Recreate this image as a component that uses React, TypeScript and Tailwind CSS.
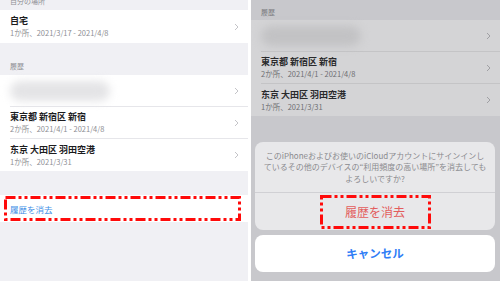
const font = { fontFamily: '"Noto Sans CJK JP", "Noto Sans", sans-serif' };

interface Place {
  title: string;
  sub: string;
  blurred?: boolean;
}

const history: Place[] = [
  { title: "", sub: "", blurred: true },
  { title: "東京都 新宿区 新宿", sub: "2か所、2021/4/1 - 2021/4/8" },
  { title: "东京 大田区 羽田空港", sub: "1か所、2021/3/31" },
];

function Chevron({ color }: { color: string }) {
  return (
    <svg width="5" height="8" viewBox="0 0 5 8" className="shrink-0">
      <polyline points="1,1 4,4 1,7" fill="none" stroke={color} strokeWidth="1" />
    </svg>
  );
}

function DashBox({ w, h }: { w: number; h: number }) {
  return (
    <svg width={w} height={h} className="absolute left-0 top-0">
      <rect
        x="1.5"
        y="1.5"
        width={w - 3}
        height={h - 3}
        fill="none"
        stroke="#ff0a0a"
        strokeWidth="3"
        strokeDasharray="10 3 3 3 3 3"
      />
    </svg>
  );
}

function Row({ place, dim, last }: { place: Place; dim?: boolean; last?: boolean }) {
  return (
    <div className={`flex h-[32px] items-center pl-[10px] ${dim ? "bg-[#d4d4d6]" : "bg-white"}`}>
      <div className={`flex h-full flex-1 items-center pr-[9px] ${last ? "" : dim ? "border-b border-[#c4c4c6]" : "border-b border-[#e6e6ea]"}`}>
        <div className="flex-1">
          {place.blurred ? (
            <div className={`h-[20px] w-[100px] rounded-full blur-[4px] ${dim ? "bg-[#c2c2c4]" : "bg-[#e4e4e6]"}`} />
          ) : (
            <>
              <div className={`text-[9px] font-semibold leading-[12px] ${dim ? "text-[#2a2a2c]" : "text-[#1c1c1e]"}`}>{place.title}</div>
              <div className={`text-[7.5px] leading-[11px] ${dim ? "text-[#6e6e72]" : "text-[#8e8e93]"}`}>{place.sub}</div>
            </>
          )}
        </div>
        <Chevron color={dim ? "#a0a0a4" : "#c4c4c8"} />
      </div>
    </div>
  );
}

function LeftPanel() {
  return (
    <div className="flex h-full w-[248px] flex-col overflow-hidden bg-[#f0f0f4]">
      <div className="h-[10px] pl-[10px]">
        <div className="mt-[-4px] text-[7px] leading-[10px] text-[#8e8e93]">自分の場所</div>
      </div>
      <div className="flex h-[33px] items-center bg-white pl-[10px] pr-[9px]">
        <div className="flex-1">
          <div className="text-[9px] font-semibold leading-[12px] text-[#1c1c1e]">自宅</div>
          <div className="text-[7.5px] leading-[11px] text-[#8e8e93]">1か所、2021/3/17 - 2021/4/8</div>
        </div>
        <Chevron color="#c4c4c8" />
      </div>
      <div className="flex h-[32px] items-end pb-[4px] pl-[10px]">
        <div className="text-[7px] leading-[10px] text-[#8e8e93]">履歴</div>
      </div>
      {history.map((p, i) => (
        <Row key={i} place={p} last={i === history.length - 1} />
      ))}
      <div className="h-[24px]" />
      <div className="relative flex h-[27px] items-center bg-white pl-[10px]">
        <div className="text-[8.5px] leading-[10px] text-[#3f8fe6]">履歴を消去</div>
        <div className="absolute left-[4px] top-[1px]">
          <DashBox w={237} h={25} />
        </div>
      </div>
    </div>
  );
}

function RightPanel() {
  return (
    <div className="flex h-full flex-1 flex-col overflow-hidden bg-[#c8c8cc]">
      <div className="flex h-[20px] items-end pb-[3px] pl-[10px]">
        <div className="text-[7px] leading-[10px] text-[#7a7a7e]">履歴</div>
      </div>
      {history.map((p, i) => (
        <Row key={i} place={p} dim last={i === history.length - 1} />
      ))}
      <div className="h-[26px]" />
      <div className="ml-[4px] mr-[5px] overflow-hidden rounded-[8px] bg-[#e8e8ea]">
        <div className="flex h-[51px] items-center justify-center border-b border-[#d0d0d4] px-[8px]">
          <p className="text-center text-[8px] leading-[11.5px] text-[#8a8a8e]">
            このiPhoneおよびお使いのiCloudアカウントにサインインし
            <br />
            ているその他のデバイスの“利用頻度の高い場所”を消去しても
            <br />
            よろしいですか?
          </p>
        </div>
        <div className="flex h-[37px] items-center justify-center">
          <div className="relative flex h-[34px] w-[111px] items-center justify-center">
            <span className="text-[12px] text-[#e35d5d]">履歴を消去</span>
            <DashBox w={111} h={34} />
          </div>
        </div>
      </div>
      <div className="ml-[4px] mr-[5px] mt-[5px] flex h-[37px] items-center justify-center rounded-[8px] bg-white">
        <span className="text-[11.5px] font-bold text-[#2f7df6]">キャンセル</span>
      </div>
    </div>
  );
}

export default function App() {
  return (
    <div className="flex h-[281px] w-[500px] overflow-hidden bg-white" style={font}>
      <LeftPanel />
      <div className="w-[3px] bg-white" />
      <RightPanel />
    </div>
  );
}
